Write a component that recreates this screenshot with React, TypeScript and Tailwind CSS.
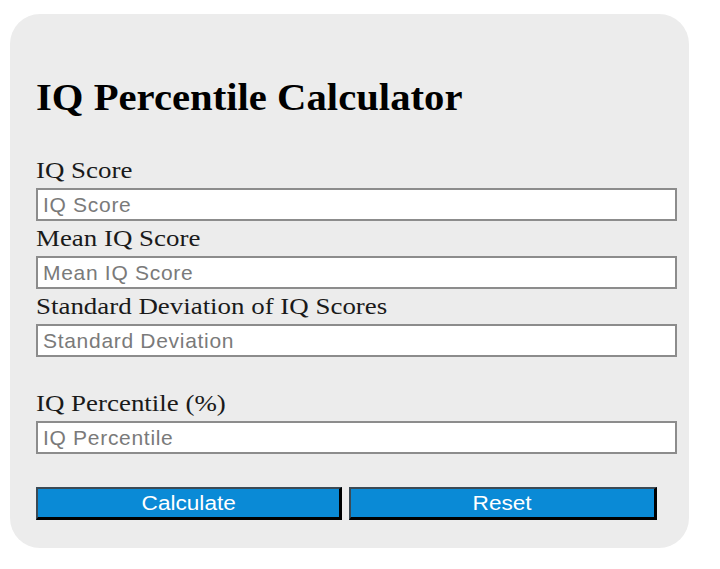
const inputClass =
  "block w-[641px] h-[33px] bg-white border-2 border-[#8c8c8c] px-[5px] text-[21px] tracking-[0.7px] font-['Liberation_Sans',Arial,sans-serif] placeholder:text-[#7a7a7a] outline-none";

const labelClass =
  "block h-[35px] text-[23px] leading-[35px] text-[#1a1a1a] font-['Liberation_Serif','Times_New_Roman',serif]";

const buttonClass =
  "w-[306px] h-[33px] bg-[#0a8ad6] text-white text-[20px] leading-none font-['Liberation_Sans',Arial,sans-serif] border-t-2 border-l-2 border-b-[3px] border-r-[3px] border-t-[#3b4a55] border-l-[#3b4a55] border-b-black border-r-black";

function Field({ label, placeholder }: { label: string; placeholder: string }) {
  return (
    <div>
      <label className={labelClass}>
        <span className="inline-block origin-left scale-x-[1.17]">{label}</span>
      </label>
      <input placeholder={placeholder} className={inputClass} />
    </div>
  );
}

export default function App() {
  const fields = [
    { label: "IQ Score", placeholder: "IQ Score" },
    { label: "Mean IQ Score", placeholder: "Mean IQ Score" },
    { label: "Standard Deviation of IQ Scores", placeholder: "Standard Deviation" },
  ];

  return (
    <div className="min-h-[569px] w-[720px] bg-white pt-[14px] pl-[10px]">
      <div className="w-[679px] h-[534px] rounded-[30px] bg-[#ececec] pl-[26px] pt-[62px]">
        <h1 className="text-[37px] leading-[44px] font-bold text-black font-['Liberation_Serif','Times_New_Roman',serif]">
          <span className="inline-block origin-left scale-x-[1.1]">IQ Percentile Calculator</span>
        </h1>
        <div className="mt-[33px]">
          {fields.map((f) => (
            <Field key={f.label} label={f.label} placeholder={f.placeholder} />
          ))}
        </div>
        <div className="mt-[29px]">
          <Field label="IQ Percentile (%)" placeholder="IQ Percentile" />
        </div>
        <div className="mt-[33px] flex gap-[7px]">
          <button className={buttonClass}>
            <span className="inline-block scale-x-[1.13]">Calculate</span>
          </button>
          <button className={`${buttonClass} w-[308px]`}>
            <span className="inline-block scale-x-[1.13]">Reset</span>
          </button>
        </div>
      </div>
    </div>
  );
}
